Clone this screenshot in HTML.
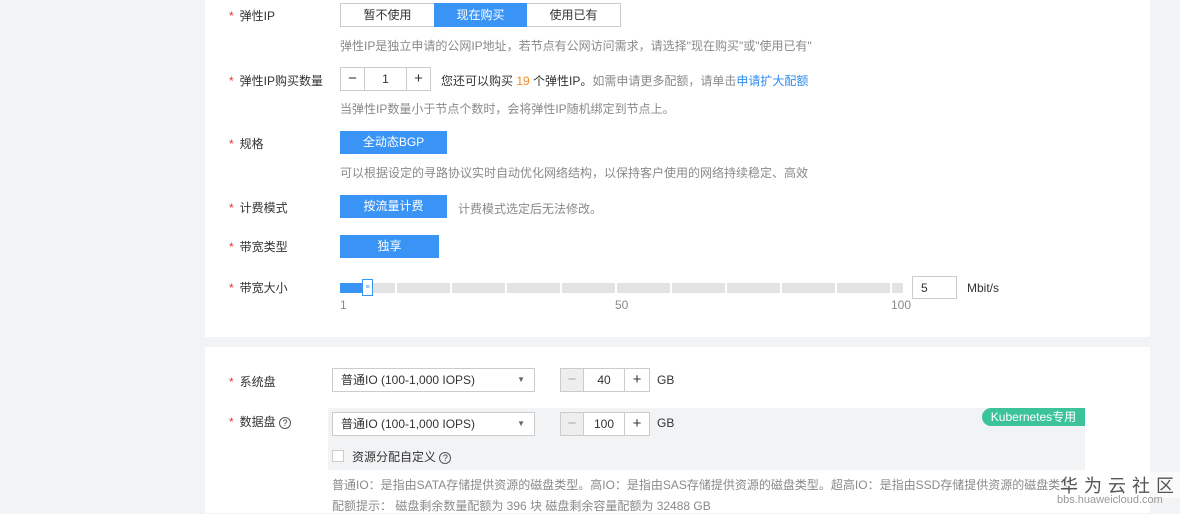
<!DOCTYPE html>
<html><head><meta charset="utf-8"><style>
*{margin:0;padding:0;box-sizing:border-box}
body{width:1180px;height:513px;background:#f2f3f5;font-family:"Liberation Sans","Noto Sans CJK SC",sans-serif;font-size:12px;color:#333;position:relative;overflow:hidden}
.p{position:absolute;background:#fff;left:205px;width:945px}
.a{position:absolute}
.lab{position:absolute;left:229px}
.lab b{color:#e33;font-weight:normal;margin-right:6px}
.tip{color:#8a8a8a}
.btn{position:absolute;background:#3a94f5;color:#fff;text-align:center;height:23px;line-height:23px}
.bx{position:absolute;border:1px solid #ccc;background:#fff;text-align:center}
</style></head><body>
<div class="p" style="top:0;height:337px"></div>
<div class="p" style="top:347px;height:166px"></div>

<div class="lab" style="top:7px"><b>*</b>弹性IP</div>
<div class="bx" style="left:340px;top:3px;width:281px;height:24px"></div>
<div class="a" style="left:341px;top:4px;width:93px;height:22px;line-height:22px;text-align:center">暂不使用</div>
<div class="btn" style="left:434px;top:3px;width:93px;height:24px;line-height:24px">现在购买</div>
<div class="a" style="left:527px;top:4px;width:93px;height:22px;line-height:22px;text-align:center">使用已有</div>
<div class="a tip" style="left:340px;top:37px">弹性IP是独立申请的公网IP地址，若节点有公网访问需求，请选择"现在购买"或"使用已有"</div>

<div class="lab" style="top:72px"><b>*</b>弹性IP购买数量</div>
<div class="bx" style="left:340px;top:67px;width:91px;height:24px"></div>
<div class="a" style="left:364px;top:68px;width:1px;height:22px;background:#ccc"></div>
<div class="a" style="left:406px;top:68px;width:1px;height:22px;background:#ccc"></div>
<div class="a" style="left:341px;top:68px;width:23px;line-height:22px;text-align:center;font-size:15px">−</div>
<div class="a" style="left:365px;top:68px;width:41px;line-height:22px;text-align:center">1</div>
<div class="a" style="left:407px;top:68px;width:23px;line-height:22px;text-align:center;font-size:15px">+</div>
<div class="a" style="left:441px;top:72px">您还可以购买 <span style="color:#f08a24">19</span> 个弹性IP。<span class="tip">如需申请更多配额，请单击</span><span style="color:#2d8cf0">申请扩大配额</span></div>
<div class="a tip" style="left:340px;top:100px">当弹性IP数量小于节点个数时，会将弹性IP随机绑定到节点上。</div>

<div class="lab" style="top:135px"><b>*</b>规格</div>
<div class="btn" style="left:340px;top:131px;width:107px">全动态BGP</div>
<div class="a tip" style="left:340px;top:164px">可以根据设定的寻路协议实时自动优化网络结构，以保持客户使用的网络持续稳定、高效</div>

<div class="lab" style="top:199px"><b>*</b>计费模式</div>
<div class="btn" style="left:340px;top:195px;width:107px">按流量计费</div>
<div class="a tip" style="left:458px;top:200px">计费模式选定后无法修改。</div>

<div class="lab" style="top:238px"><b>*</b>带宽类型</div>
<div class="btn" style="left:340px;top:235px;width:99px">独享</div>

<div class="lab" style="top:279px"><b>*</b>带宽大小</div>
<div class="a" style="left:342px;top:283px;width:561px;height:10px;background:repeating-linear-gradient(90deg,#e3e3e3 0 53px,#fff 53px 55px)"></div>
<div class="a" style="left:340px;top:283px;width:24px;height:10px;background:#3a94f5"></div>
<div class="a" style="left:362px;top:279px;width:11px;height:17px;border:1px solid #3a94f5;background:#fff;font-size:7px;color:#3a94f5;text-align:center;line-height:15px">≡</div>
<div class="a tip" style="left:340px;top:298px">1</div>
<div class="a tip" style="left:615px;top:298px">50</div>
<div class="a tip" style="left:891px;top:298px">100</div>
<div class="bx" style="left:912px;top:276px;width:45px;height:23px;text-align:left;padding-left:8px;line-height:22px">5</div>
<div class="a" style="left:967px;top:281px">Mbit/s</div>

<div class="lab" style="top:373px"><b>*</b>系统盘</div>
<div class="bx" style="left:332px;top:368px;width:203px;height:24px;text-align:left;padding-left:8px;line-height:22px">普通IO (100-1,000 IOPS)<span style="position:absolute;right:9px;top:0;font-size:8px;color:#666">▼</span></div>
<div class="bx" style="left:560px;top:368px;width:90px;height:24px"></div>
<div class="a" style="left:561px;top:369px;width:23px;height:22px;background:#eee;border-right:1px solid #ccc;color:#aaa;text-align:center;line-height:22px;font-size:15px">−</div>
<div class="a" style="left:584px;top:369px;width:41px;line-height:22px;text-align:center;border-right:1px solid #ccc">40</div>
<div class="a" style="left:625px;top:369px;width:24px;line-height:22px;text-align:center;font-size:15px">+</div>
<div class="a" style="left:657px;top:373px">GB</div>

<div class="a" style="left:328px;top:408px;width:757px;height:62px;background:#f2f3f5"></div>
<div class="lab" style="top:413px"><b>*</b>数据盘 <span style="display:inline-block;width:12px;height:12px;border:1px solid #555;border-radius:50%;font-size:9px;text-align:center;line-height:10px">?</span></div>
<div class="bx" style="left:332px;top:412px;width:203px;height:24px;text-align:left;padding-left:8px;line-height:22px">普通IO (100-1,000 IOPS)<span style="position:absolute;right:9px;top:0;font-size:8px;color:#666">▼</span></div>
<div class="bx" style="left:560px;top:412px;width:90px;height:24px"></div>
<div class="a" style="left:561px;top:413px;width:23px;height:22px;background:#eee;border-right:1px solid #ccc;color:#aaa;text-align:center;line-height:22px;font-size:15px">−</div>
<div class="a" style="left:584px;top:413px;width:41px;line-height:22px;text-align:center;border-right:1px solid #ccc">100</div>
<div class="a" style="left:625px;top:413px;width:24px;line-height:22px;text-align:center;font-size:15px">+</div>
<div class="a" style="left:657px;top:416px">GB</div>
<div class="a" style="left:982px;top:408px;width:103px;height:18px;background:#3cc39a;color:#fff;border-radius:9px 0 0 9px;text-align:center;line-height:18px">Kubernetes专用</div>
<div class="a" style="left:332px;top:450px;width:12px;height:12px;border:1px solid #ccc;background:#fff"></div>
<div class="a" style="left:352px;top:448px">资源分配自定义 <span style="display:inline-block;width:12px;height:12px;border:1px solid #555;border-radius:50%;font-size:9px;text-align:center;line-height:10px">?</span></div>
<div class="a tip" style="left:332px;top:476px;white-space:nowrap">普通IO：是指由SATA存储提供资源的磁盘类型。高IO：是指由SAS存储提供资源的磁盘类型。超高IO：是指由SSD存储提供资源的磁盘类型。</div>
<div class="a tip" style="left:332px;top:497px">配额提示： 磁盘剩余数量配额为 396 块 磁盘剩余容量配额为 32488 GB</div>
<div class="a" style="left:1060px;top:472px;font-size:18px;color:#555;letter-spacing:6px;background:rgba(255,255,255,.6)">华为云社区</div>
<div class="a" style="left:1057px;top:494px;font-size:11px;color:#999">bbs.huaweicloud.com</div>
</body></html>
